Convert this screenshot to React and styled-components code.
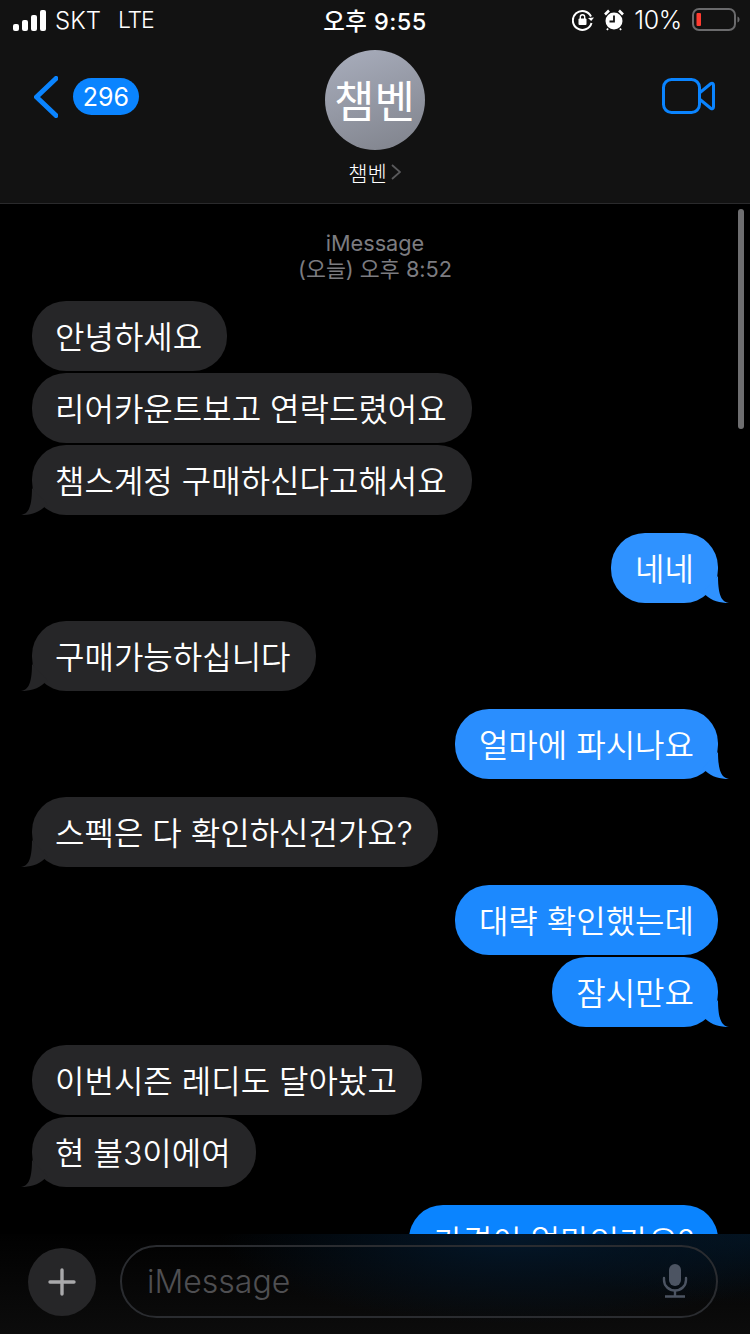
import React from "react";
import styled, { createGlobalStyle } from "styled-components";

const KR = `Inter, "Noto Sans CJK KR", sans-serif`;

const GlobalStyle = createGlobalStyle`
  html, body {
    margin: 0;
    padding: 0;
    background: #000;
    font-family: ${KR};
  }
`;

const Screen = styled.div`
  width: 750px;
  height: 1334px;
  display: flex;
  flex-direction: column;
  overflow: hidden;
  background: #000;
  color: #fff;
`;

const Header = styled.header`
  flex: 0 0 204px;
  box-sizing: border-box;
  background: #121212;
  border-bottom: 1px solid #2a2a2c;
  display: flex;
  flex-direction: column;
`;

const StatusBar = styled.div`
  height: 40px;
  display: grid;
  grid-template-columns: 1fr auto 1fr;
  align-items: center;
  padding: 0 13px;
  font-size: 24px;
  font-weight: 300;
`;

const StatusLeft = styled.div`
  display: flex;
  align-items: center;
  gap: 9px;
`;

const Carrier = styled.span`
  margin-right: 8px;
`;

const Network = styled.span`
  font-size: 23px;
  letter-spacing: -1.2px;
`;

const Clock = styled.div`
  font-weight: 500;
  font-size: 23.5px;
  letter-spacing: 0.4px;
`;

const StatusRight = styled.div`
  display: flex;
  align-items: center;
  justify-content: flex-end;
  gap: 10px;
  margin-right: -3px;
`;

const Percent = styled.span`
  font-size: 25px;
  letter-spacing: -0.3px;
`;

const Nav = styled.div`
  flex: 1;
  display: grid;
  grid-template-columns: 1fr auto 1fr;
  padding: 10px 35px 0 34px;
`;

const Back = styled.div`
  display: flex;
  align-items: center;
  gap: 15px;
  height: 93px;
`;

const Badge = styled.span`
  width: 66px;
  height: 37px;
  border-radius: 19px;
  background: #0a84ff;
  font-size: 25px;
  display: flex;
  align-items: center;
  justify-content: center;
`;

const Contact = styled.div`
  display: flex;
  flex-direction: column;
  align-items: center;
`;

const Avatar = styled.div`
  width: 100px;
  height: 100px;
  border-radius: 50%;
  background: linear-gradient(160deg, #a9aebd, #7f828b);
  display: flex;
  align-items: center;
  justify-content: center;
  font-size: 44px;
  font-weight: 400;
  padding-bottom: 2px;
  box-sizing: border-box;
`;

const NameRow = styled.div`
  display: flex;
  align-items: center;
  gap: 4px;
  margin-top: 9px;
  height: 26px;
  font-size: 21px;
  font-weight: 300;
`;

const VideoWrap = styled.div`
  display: flex;
  align-items: center;
  justify-content: flex-end;
  height: 92px;
`;

const Thread = styled.main`
  flex: 1;
  position: relative;
  overflow: hidden;
  display: flex;
  flex-direction: column;
  gap: 18px;
  padding: 27px 32px 0;
`;

const ScrollThumb = styled.div`
  position: absolute;
  top: 5px;
  right: 6px;
  width: 6px;
  height: 220px;
  border-radius: 3px;
  background: #6e6e70;
`;

const Meta = styled.div`
  text-align: center;
  font-size: 21.7px;
  line-height: 26px;
  color: #7c7c80;
  margin-top: -1px;
  margin-bottom: 1px;
`;

const Group = styled.div`
  display: flex;
  flex-direction: column;
  gap: 2px;
  align-items: ${(p) => (p.$sent ? "flex-end" : "flex-start")};
`;

const Bubble = styled.div`
  position: relative;
  flex: 0 0 70px;
  height: 70px;
  box-sizing: border-box;
  padding: ${(p) => (p.$sent ? "0 24px 3px 24px" : "0 25px 3px 23px")};
  border-radius: 34px;
  display: flex;
  align-items: center;
  font-size: 32px;
  font-weight: 350;
  white-space: nowrap;
  background: ${(p) => p.$bg};
`;

const TailSvg = styled.svg`
  position: absolute;
  bottom: 0;
  ${(p) => (p.$sent ? "right: -11px; transform: scaleX(-1);" : "left: -11px;")}
`;

const Tail = ({ sent, color }) => (
  <TailSvg $sent={sent} width="30" height="30" viewBox="0 0 30 30">
    <path d="M0 30C6 29 11 25 11 3L27 20L23.5 22C17 28 9 30 0 30Z" fill={color} />
  </TailSvg>
);

const Composer = styled.footer`
  flex: 0 0 100px;
  box-sizing: border-box;
  display: flex;
  align-items: center;
  gap: 24px;
  padding: 0 32px 0 28px;
  background:
    radial-gradient(ellipse 300px 90px at 520px 0, #04182b 0%, rgba(4, 24, 43, 0) 100%),
    radial-gradient(ellipse 220px 70px at 750px 0, #04121e 0%, rgba(4, 18, 30, 0) 100%),
    linear-gradient(180deg, #010101, #0c0c0c);
`;

const PlusButton = styled.div`
  flex: 0 0 68px;
  height: 68px;
  border-radius: 50%;
  background: #262628;
  display: flex;
  align-items: center;
  justify-content: center;
  margin-top: -4px;
`;

const InputBox = styled.div`
  flex: 1;
  height: 73px;
  box-sizing: border-box;
  margin-top: -6px;
  border: 2px solid #2a2c30;
  border-radius: 37px;
  padding: 0 28px 0 25px;
  display: flex;
  align-items: center;
  justify-content: space-between;
`;

const Placeholder = styled.span`
  font-size: 32px;
  font-weight: 300;
  color: #4f4f52;
`;

const GREY = "#262628";
const thread = [
  { lines: ["안녕하세요", "리어카운트보고 연락드렸어요", "챔스계정 구매하신다고해서요"] },
  { sent: true, color: "#2f92ff", lines: ["네네"] },
  { lines: ["구매가능하십니다"] },
  { sent: true, color: "#2a8efe", lines: ["얼마에 파시나요"] },
  { lines: ["스펙은 다 확인하신건가요?"] },
  { sent: true, color: "#1c89fe", lines: ["대략 확인했는데", "잠시만요"] },
  { lines: ["이번시즌 레디도 달아놨고", "현 불3이에여"] },
  { sent: true, color: "#0a84ff", lines: ["가격이 얼마인가요?"] },
];

export default function App() {
  return (
    <Screen>
      <GlobalStyle />
      <Header>
        <StatusBar>
          <StatusLeft>
            <svg width="33" height="21" viewBox="0 0 33 21" fill="#fff">
              <rect x="0" y="14" width="6" height="7" rx="2" />
              <rect x="9" y="10" width="6" height="11" rx="2" />
              <rect x="18" y="5" width="6" height="16" rx="2" />
              <rect x="27" y="0" width="6" height="21" rx="2" />
            </svg>
            <Carrier>SKT</Carrier>
            <Network>LTE</Network>
          </StatusLeft>
          <Clock>오후 9:55</Clock>
          <StatusRight>
            <svg width="22" height="22" viewBox="0 0 22 22" fill="none">
              <path d="M19 7.5A9.5 9.5 0 1 0 19.5 14" stroke="#fff" strokeWidth="2" />
              <path d="M16 9l3.2 3 2.8-3.4z" fill="#fff" />
              <rect x="6.5" y="9.5" width="8" height="6.5" rx="1" fill="#fff" />
              <path d="M8.3 10V8a2.2 2.2 0 0 1 4.4 0v2" stroke="#fff" strokeWidth="1.4" />
            </svg>
            <svg width="20" height="22" viewBox="0 0 20 22" fill="none">
              <circle cx="10" cy="12" r="8.5" fill="#fff" />
              <path d="M10 6.5V12.5H5.5" stroke="#121212" strokeWidth="1.8" />
              <path d="M1 5.5L5 1.5M19 5.5L15 1.5" stroke="#fff" strokeWidth="2.6" />
              <path d="M4 19.5L3 21M16 19.5L17 21" stroke="#fff" strokeWidth="1.8" />
            </svg>
            <Percent>10%</Percent>
            <svg width="48" height="24" viewBox="0 0 48 24" fill="none">
              <rect x="1" y="1" width="42" height="21" rx="6" stroke="#6a6a6c" strokeWidth="2" />
              <rect x="4.5" y="5" width="4.5" height="13" rx="1" fill="#ff3b30" />
              <path d="M45.5 8.5c1.5.5 2 1.6 2 3s-.5 2.5-2 3z" fill="#6a6a6c" />
            </svg>
          </StatusRight>
        </StatusBar>
        <Nav>
          <Back>
            <svg width="24" height="42" viewBox="0 0 24 42" fill="none">
              <path d="M22 2.5L2.5 21L22 39.5" stroke="#0a84ff" strokeWidth="5" strokeLinecap="round" strokeLinejoin="round" />
            </svg>
            <Badge>296</Badge>
          </Back>
          <Contact>
            <Avatar>챔벤</Avatar>
            <NameRow>
              챔벤
              <svg width="10" height="16" viewBox="0 0 10 16" fill="none">
                <path d="M1 1L9 8L1 15" stroke="#5a5a5c" strokeWidth="1.8" />
              </svg>
            </NameRow>
          </Contact>
          <VideoWrap>
            <svg width="53" height="36" viewBox="0 0 53 36" fill="none" stroke="#0a84ff" strokeWidth="3">
              <rect x="1.5" y="1.5" width="36" height="33" rx="8" />
              <path d="M38 14.5L49 5.5C50 4.8 51.5 5.3 51.5 7V29C51.5 30.7 50 31.2 49 30.5L38 21.5" strokeLinejoin="round" />
            </svg>
          </VideoWrap>
        </Nav>
      </Header>
      <Thread>
        <ScrollThumb />
        <Meta>
          iMessage
          <br />
          (오늘) 오후 8:52
        </Meta>
        {thread.map((group, i) => {
          const color = group.color || GREY;
          return (
            <Group key={i} $sent={group.sent}>
              {group.lines.map((line, j) => (
                <Bubble key={j} $bg={color} $sent={group.sent}>
                  {line}
                  {j === group.lines.length - 1 && <Tail sent={group.sent} color={color} />}
                </Bubble>
              ))}
            </Group>
          );
        })}
      </Thread>
      <Composer>
        <PlusButton>
          <svg width="28" height="28" viewBox="0 0 28 28" stroke="#a9a9ab" strokeWidth="3.4" strokeLinecap="round">
            <path d="M14 2V26M2 14H26" />
          </svg>
        </PlusButton>
        <InputBox>
          <Placeholder>iMessage</Placeholder>
          <svg width="26" height="34" viewBox="0 0 26 34" fill="none">
            <rect x="7" y="0" width="12" height="22" rx="6" fill="#4c5462" />
            <path d="M2 14V16C2 22 7 26.5 13 26.5S24 22 24 16V14" stroke="#4c5462" strokeWidth="2.4" strokeLinecap="round" />
            <path d="M13 27V32M3 32.5H23" stroke="#4c5462" strokeWidth="2.4" />
          </svg>
        </InputBox>
      </Composer>
    </Screen>
  );
}
